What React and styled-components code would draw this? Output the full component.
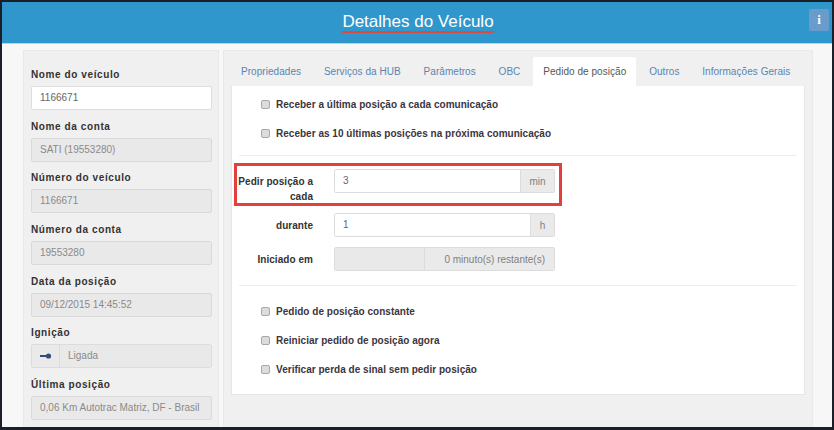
import React from "react";
import styled, { createGlobalStyle } from "styled-components";

const Global = createGlobalStyle`
  html, body {
    margin: 0;
    padding: 0;
    height: 430px;
    overflow: hidden;
    background: #1b1f27;
  }
  * {
    box-sizing: border-box;
  }
`;

const Frame = styled.div`
  width: 834px;
  height: 430px;
  padding: 2px 2px 3px 2px;
  font-family: "Liberation Sans", Arial, sans-serif;
  font-size: 10px;
  color: #333;
  background: #1b1f27;
`;

const Window = styled.div`
  height: 100%;
  background: #f7f7f7;
  overflow: hidden;
  display: flex;
  flex-direction: column;
`;

const Header = styled.header`
  flex: none;
  height: 42px;
  background: #3097cd;
  border-bottom: 1px solid #a9d7ec;
  display: flex;
  align-items: center;
  justify-content: center;
  position: relative;
`;

const Title = styled.h1`
  margin: 0 0 1px 2px;
  font-size: 17px;
  font-weight: 400;
  line-height: 19px;
  color: #fff;
  border-bottom: 2px solid #dc4a42;
`;

const InfoButton = styled.button`
  position: absolute;
  top: 7px;
  right: 3px;
  width: 20px;
  height: 22px;
  padding: 0;
  border: 0;
  border-radius: 2px;
  background: #6a9ccb;
  color: #fff;
  font-family: "Liberation Serif", serif;
  font-weight: 700;
  font-size: 13px;
`;

const Body = styled.div`
  flex: 1;
  min-height: 0;
  display: flex;
  gap: 4px;
  padding: 6px 19px 0 21px;
`;

const Sidebar = styled.aside`
  flex: none;
  width: 196px;
  background: #f0f0f0;
  border: 1px solid #e9e9e9;
  border-bottom: 0;
  padding: 16px 6px 0 7px;
  display: flex;
  flex-direction: column;
  gap: 8.7px;
`;

const Field = styled.div`
  display: flex;
  flex-direction: column;
  gap: 4px;
`;

const FieldLabel = styled.label`
  font-weight: 700;
  font-size: 10px;
  line-height: 15px;
  letter-spacing: 0.6px;
  color: #333;
`;

const Input = styled.div`
  height: 24px;
  line-height: 22px;
  padding: 0 8px;
  border: 1px solid ${(p) => (p.$disabled ? "#d9d9d9" : "#dedede")};
  border-radius: 2px;
  background: ${(p) => (p.$disabled ? "#e9e9e9" : "#fff")};
  color: ${(p) => (p.$disabled ? "#8a8a8a" : "#666")};
  font-size: 10px;
  white-space: nowrap;
  overflow: hidden;
`;

const Group = styled.div`
  height: 24px;
  display: flex;
  border: 1px solid #dcdcdc;
  border-radius: 2px;
  overflow: hidden;
  background: #fff;
  color: #666;
`;

const GroupAddon = styled.div`
  flex: none;
  width: ${(p) => p.$width}px;
  display: flex;
  align-items: center;
  justify-content: ${(p) => p.$justify || "center"};
  padding: 0 ${(p) => (p.$justify ? 9 : 0)}px;
  background: #eaeaea;
  color: #808080;
  white-space: nowrap;
  border-${(p) => p.$side || "left"}: 1px solid #dcdcdc;
`;

const GroupValue = styled.div`
  flex: 1;
  padding: 0 8px;
  line-height: 22px;
  color: ${(p) => p.$color || "#666"};
  background: ${(p) => p.$bg || "#fff"};
`;

const Main = styled.main`
  flex: 1;
  background: #f0f0f0;
  border: 1px solid #e9e9e9;
  border-bottom: 0;
  padding: 6px 7px 0;
  display: flex;
  flex-direction: column;
`;

const Tabs = styled.nav`
  flex: none;
  height: 29px;
  display: flex;
  gap: 2.8px;
`;

const Tab = styled.div`
  padding: 0 10px;
  display: flex;
  align-items: center;
  white-space: nowrap;
  color: ${(p) => (p.$active ? "#555" : "#5b84b1")};
  background: ${(p) => (p.$active ? "#fff" : "transparent")};
  border-radius: 2px 2px 0 0;
  letter-spacing: 0.05px;
`;

const Panel = styled.section`
  flex: none;
  height: 309px;
  background: #fff;
  border: 1px solid #e6e6e6;
  border-top: 0;
  padding: 0 7px;
`;

const CheckList = styled.div`
  display: flex;
  flex-direction: column;
  gap: 14px;
  padding: ${(p) => p.$pad};
`;

const CheckRow = styled.label`
  display: flex;
  align-items: center;
  gap: 6px;
  padding-left: 22px;
  height: 15px;
  font-weight: 700;
  font-size: 10px;
  letter-spacing: 0.02px;
  color: #3b3540;
`;

const Box = styled.span`
  flex: none;
  width: 9px;
  height: 9px;
  border: 1px solid #a8a8a8;
  border-radius: 2px;
  background: #dcdcdc;
`;

const Divider = styled.hr`
  margin: 0;
  border: 0;
  border-top: 1px solid #ededed;
`;

const FormArea = styled.div`
  display: flex;
  flex-direction: column;
  gap: 10px;
  padding: 7px 0 14px;
`;

const Highlight = styled.div`
  width: 328px;
  height: 43px;
  margin: 0 0 -3px -5px;
  border: 3px solid #e2403c;
  display: flex;
  align-items: flex-start;
  padding-top: 3px;
`;

const FormRow = styled.div`
  display: flex;
  align-items: center;
  height: 24px;
`;

const RowLabel = styled.div`
  flex: none;
  width: 74px;
  text-align: right;
  font-weight: 700;
  font-size: 10px;
  line-height: 15px;
  letter-spacing: 0.05px;
  color: #333;
`;

const RowControl = styled(Group)`
  margin-left: 21px;
  flex: none;
  width: 221px;
`;

const HighlightLabel = styled(RowLabel)`
  width: 76px;
  margin-top: 5px;
`;

const KeyIcon = () => (
  <svg width="12" height="6" viewBox="0 0 12 6" aria-hidden="true">
    <rect x="0" y="2" width="7" height="2" fill="#2d4f78" />
    <circle cx="8.5" cy="3" r="2.6" fill="#2d4f78" />
  </svg>
);

const fields = [
  { label: "Nome da conta", value: "SATI (19553280)" },
  { label: "Número do veículo", value: "1166671" },
  { label: "Número da conta", value: "19553280" },
  { label: "Data da posição", value: "09/12/2015 14:45:52" },
];

const tabs = [
  "Propriedades",
  "Serviços da HUB",
  "Parâmetros",
  "OBC",
  "Pedido de posição",
  "Outros",
  "Informações Gerais",
];

const Check = ({ children }) => (
  <CheckRow>
    <Box />
    {children}
  </CheckRow>
);

export default function App() {
  return (
    <Frame>
      <Global />
      <Window>
        <Header>
          <Title>Detalhes do Veículo</Title>
          <InfoButton>i</InfoButton>
        </Header>
        <Body>
          <Sidebar>
            <Field>
              <FieldLabel>Nome do veículo</FieldLabel>
              <Input>1166671</Input>
            </Field>
            {fields.map((f) => (
              <Field key={f.label}>
                <FieldLabel>{f.label}</FieldLabel>
                <Input $disabled>{f.value}</Input>
              </Field>
            ))}
            <Field>
              <FieldLabel>Ignição</FieldLabel>
              <Group>
                <GroupAddon $width={28} $side="right">
                  <KeyIcon />
                </GroupAddon>
                <GroupValue $bg="#e9e9e9" $color="#8a8a8a">
                  Ligada
                </GroupValue>
              </Group>
            </Field>
            <Field>
              <FieldLabel>Última posição</FieldLabel>
              <Input $disabled>0,06 Km Autotrac Matriz, DF - Brasil</Input>
            </Field>
          </Sidebar>
          <Main>
            <Tabs>
              {tabs.map((t) => (
                <Tab key={t} $active={t === "Pedido de posição"}>
                  {t}
                </Tab>
              ))}
            </Tabs>
            <Panel>
              <CheckList $pad="11px 0 14px">
                <Check>Receber a última posição a cada comunicação</Check>
                <Check>Receber as 10 últimas posições na próxima comunicação</Check>
              </CheckList>
              <Divider />
              <FormArea>
                <Highlight>
                  <HighlightLabel>Pedir posição a cada</HighlightLabel>
                  <RowControl>
                    <GroupValue>3</GroupValue>
                    <GroupAddon $width={34}>min</GroupAddon>
                  </RowControl>
                </Highlight>
                <FormRow>
                  <RowLabel>durante</RowLabel>
                  <RowControl>
                    <GroupValue>1</GroupValue>
                    <GroupAddon $width={24}>h</GroupAddon>
                  </RowControl>
                </FormRow>
                <FormRow>
                  <RowLabel>Iniciado em</RowLabel>
                  <RowControl>
                    <GroupValue $bg="#e9e9e9" />
                    <GroupAddon $width={130} $justify="flex-end">
                      0 minuto(s) restante(s)
                    </GroupAddon>
                  </RowControl>
                </FormRow>
              </FormArea>
              <Divider />
              <CheckList $pad="18px 0 0">
                <Check>Pedido de posição constante</Check>
                <Check>Reiniciar pedido de posição agora</Check>
                <Check>Verificar perda de sinal sem pedir posição</Check>
              </CheckList>
            </Panel>
          </Main>
        </Body>
      </Window>
    </Frame>
  );
}
